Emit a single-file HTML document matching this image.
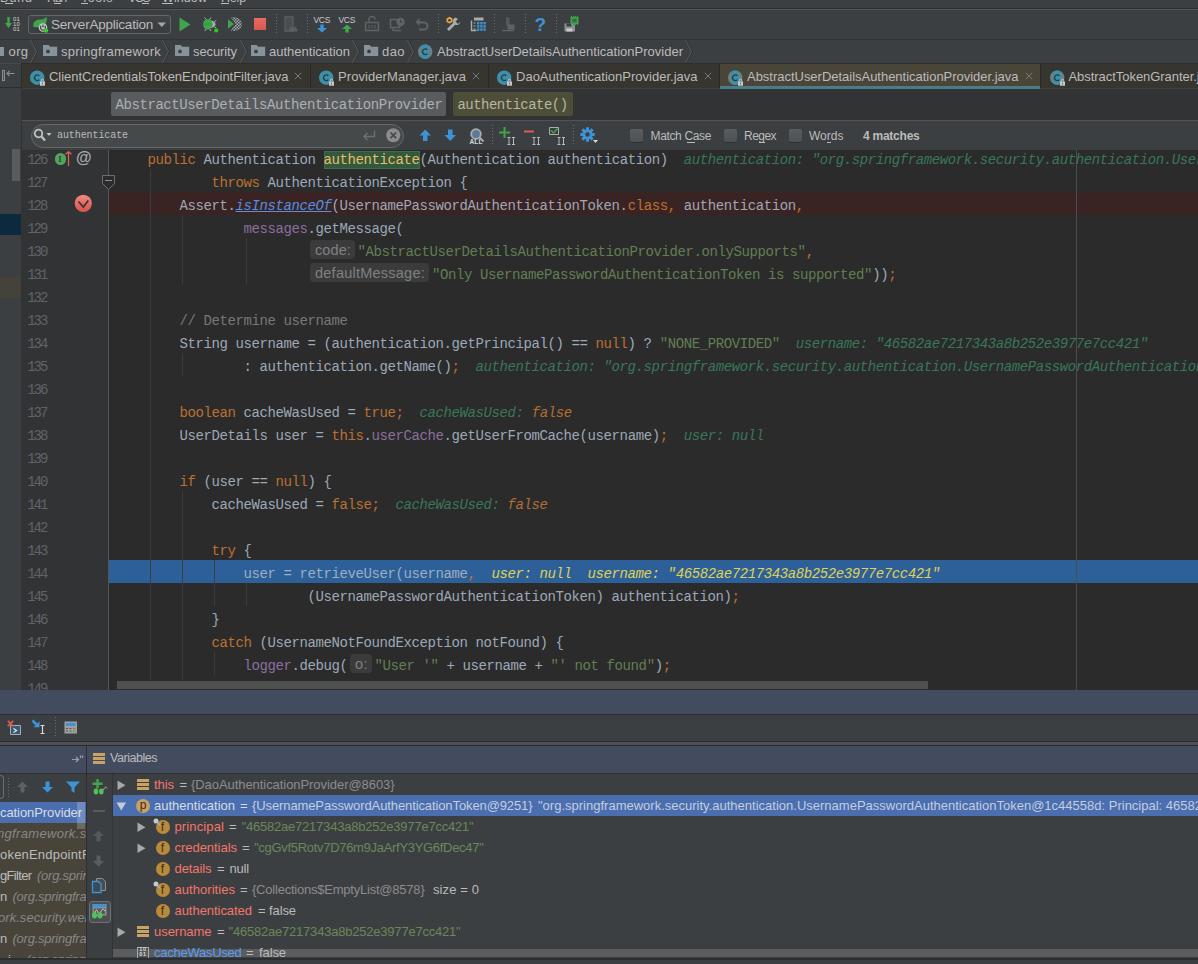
<!DOCTYPE html>
<html lang="en"><head><meta charset="utf-8"><title>IDE</title>
<style>
html,body{margin:0;padding:0;background:#3c3f41}
body{width:1198px;height:964px;overflow:hidden;background:#3c3f41;position:relative;font-family:'Liberation Sans',sans-serif}
.r{position:absolute;display:block}
.t{position:absolute;white-space:pre;line-height:1;font-family:'Liberation Sans',sans-serif}
.m{font-family:'Liberation Mono',monospace}
.cl{position:absolute;left:115.5px;white-space:pre;font:14px/23px 'Liberation Mono',monospace;letter-spacing:-0.4px;color:#a9b7c6;height:23px;opacity:.9}
.cl i{font-style:italic}
.k{color:#cc7832}.s{color:#6a8759}.fd{color:#9876aa}.c{color:#808080}.dv{color:#3b8060;font-style:italic}.dv.k{color:#c57633}.ln{position:absolute;left:27.300px;font:14px/23px 'Liberation Mono',monospace;letter-spacing:-2.1px;color:#606366}
.hint{position:absolute;background:#3b3b3b;border-radius:4px;height:18.5px}
</style></head>
<body>
<div class="r" style="left:0px;top:0px;width:1198px;height:8px;background:#3c3f41;"></div>
<span class="t" style="left:0px;top:-7.98px;font-size:12.5px;color:#bbbbbb;letter-spacing:1.041px;">Build</span>
<span class="t" style="left:47px;top:-7.98px;font-size:12.5px;color:#bbbbbb;letter-spacing:-1.312px;">Run</span>
<span class="t" style="left:81px;top:-7.98px;font-size:12.5px;color:#bbbbbb;letter-spacing:0.562px;">Tools</span>
<span class="t" style="left:128px;top:-7.98px;font-size:12.5px;color:#bbbbbb;letter-spacing:-1.568px;">VCS</span>
<span class="t" style="left:162px;top:-7.98px;font-size:12.5px;color:#bbbbbb;letter-spacing:0.089px;">Window</span>
<span class="t" style="left:221px;top:-7.98px;font-size:12.5px;color:#bbbbbb;letter-spacing:-0.180px;">Help</span>
<div class="r" style="left:5px;top:3px;width:8px;height:1px;background:#bbbbbb;"></div>
<div class="r" style="left:54px;top:3px;width:7px;height:1px;background:#bbbbbb;"></div>
<div class="r" style="left:81px;top:3px;width:7px;height:1px;background:#bbbbbb;"></div>
<div class="r" style="left:142px;top:3px;width:7px;height:1px;background:#bbbbbb;"></div>
<div class="r" style="left:162px;top:3px;width:11px;height:1px;background:#bbbbbb;"></div>
<div class="r" style="left:221px;top:3px;width:8px;height:1px;background:#bbbbbb;"></div>
<div class="r" style="left:0px;top:8px;width:1198px;height:1px;background:#2d2f30;"></div>
<div class="r" style="left:0px;top:9px;width:1198px;height:1px;background:#555759;"></div>
<div class="r" style="left:0px;top:10px;width:1198px;height:29px;background:#3c3f41;"></div>
<div class="r" style="left:0px;top:39px;width:1198px;height:1px;background:#323436;"></div>
<svg class="r" style="left:4px;top:16px;" width="18" height="17" viewBox="0 0 18 17"><path d="M3.300 1h2.400v6h2.300L4.500 12 1 7h2.300z" fill="#3fa94a"/></svg>
<span class="t" style="left:13px;top:16.22px;font-size:6px;color:#d4d4d4;letter-spacing:0.156px;">01</span>
<span class="t" style="left:13px;top:21.22px;font-size:6px;color:#d4d4d4;letter-spacing:0.156px;">10</span>
<span class="t" style="left:13px;top:26.22px;font-size:6px;color:#d4d4d4;letter-spacing:0.156px;">01</span>
<div class="r" style="left:28px;top:15px;width:143px;height:19px;background:#3c3f41;border:1px solid #646769;border-radius:3px;box-sizing:border-box;background:linear-gradient(#414446,#393c3e)"></div>
<svg class="r" style="left:32px;top:16px;" width="17" height="17" viewBox="0 0 17 17"><path d="M1.5 11C0 6 4 3.5 9 3.5 12 3.500 13.500 2 14.500 .5c1 5-1 9.500-5.500 10.500-3 .6-5.500 0-7.500 0z" fill="#3fa54b"/><circle cx="11" cy="11.5" r="4.300" fill="#c9c9c9"/><path d="M9.300 9.800a2.500 2.500 0 1 0 3.400 0M11 8.500v3" stroke="#444" stroke-width="1.200" fill="none"/><circle cx="14" cy="14.500" r="2.200" fill="#2fd02f"/></svg>
<span class="t" style="left:51px;top:17.57px;font-size:13.5px;color:#bbbbbb;letter-spacing:-0.224px;">ServerApplication</span>
<svg class="r" style="left:157px;top:22px;" width="10" height="6" viewBox="0 0 10 6"><path d="M.5 .5h8.500L4.750 5z" fill="#a4a6a8"/></svg>
<svg class="r" style="left:179px;top:17px;" width="13" height="15" viewBox="0 0 13 15"><path d="M.5 .5L11.500 7.500 .5 14.500z" fill="#3fa54b"/></svg>
<svg class="r" style="left:202px;top:16px;" width="17" height="17" viewBox="0 0 17 17"><path d="M2.500 1.500l2 2.200M9 1.500L7.500 3.700M2.500 15l2-2.200M9 15l-1.500-2.200M12.500 5.500l1.800-1M12.500 11l1.800 1" stroke="#b4b6b8" stroke-width="1" fill="none"/><path d="M9 4.500c3 .5 4.500 2 4.500 3.800S12 11.500 9 12z" fill="#a9abad"/><ellipse cx="5.800" cy="8.200" rx="4.800" ry="5.200" fill="#3fa54b"/><path d="M1 8.200h9.500" stroke="#2f8e3f" stroke-width=".6"/><circle cx="14.200" cy="14.500" r="2.100" fill="#22d022"/></svg>
<svg class="r" style="left:226px;top:16px;" width="17" height="17" viewBox="0 0 17 17"><defs><pattern id="ck" width="3" height="3" patternUnits="userSpaceOnUse"><rect width="1.500" height="1.500" fill="#aeb0b2"/><rect x="1.500" y="1.500" width="1.500" height="1.500" fill="#aeb0b2"/></pattern></defs><path d="M5 1.500C9 -.5 15.500 3 15.800 8S10 16.500 5 14.500L9.500 8z" fill="url(#ck)"/><path d="M2 3.300L8 8 2 12.700z" fill="#3fa54b"/></svg>
<div class="r" style="left:254px;top:18px;width:12px;height:12px;background:#e0625a;background:linear-gradient(#e96c60,#d8574d)"></div>
<div class="r" style="left:276px;top:14px;width:1px;height:21px;background:repeating-linear-gradient(#6a6d6f 0 1px,transparent 1px 3px)"></div>
<svg class="r" style="left:282px;top:16px;" width="17" height="17" viewBox="0 0 17 17"><path d="M3 .8h8v14.400h-8z" fill="#4a4d4f" stroke="#5e6163" stroke-width="1.200"/><path d="M6.500 15.500a4.500 4.500 0 0 1 9 0z" fill="#5c5f61"/><path d="M8 10.500l1 1.500M14 10.500l-1 1.500" stroke="#5c5f61"/></svg>
<div class="r" style="left:307px;top:14px;width:1px;height:21px;background:repeating-linear-gradient(#6a6d6f 0 1px,transparent 1px 3px)"></div>
<span class="t" style="left:313.5px;top:15.50px;font-size:8.5px;color:#c8cacc;letter-spacing:-0.328px;">VCS</span>
<svg class="r" style="left:317px;top:24px;" width="11" height="9" viewBox="0 0 11 9"><path d="M3.300 .5h3.400v3.500H10L5 8.500 0 4h3.300z" fill="#3d93d3"/></svg>
<span class="t" style="left:338.5px;top:15.50px;font-size:8.5px;color:#c8cacc;letter-spacing:-0.328px;">VCS</span>
<svg class="r" style="left:342px;top:24px;" width="11" height="9" viewBox="0 0 11 9"><path d="M3.300 8.500h3.400V5H10L5 .5 0 5h3.300z" fill="#3fa54b"/></svg>
<svg class="r" style="left:364px;top:16px;" width="17" height="17" viewBox="0 0 17 17"><path d="M1.500 6.500h13v8h-13zM5 6V3.500a3 3 0 0 1 6 0" fill="none" stroke="#606365" stroke-width="1.500"/><path d="M5 9v3.500M8 9v3.500M11 9v3.500" stroke="#606365"/></svg>
<svg class="r" style="left:389px;top:16px;" width="17" height="17" viewBox="0 0 17 17"><path d="M1.500 3.500h9v8h-9z" fill="none" stroke="#606365" stroke-width="1.500"/><path d="M4 11.500v3h8" fill="none" stroke="#606365" stroke-width="1.300"/><circle cx="11.500" cy="6" r="4.200" fill="#606365"/><path d="M11.500 3.500V6h2" stroke="#3c3f41" fill="none"/></svg>
<svg class="r" style="left:414px;top:16px;" width="17" height="17" viewBox="0 0 17 17"><path d="M5.500 2L1.500 6l4 4V7.500h4.500a2.500 2.500 0 0 1 0 5H5v2h5a4.500 4.500 0 0 0 0-9H5.500z" fill="#606365"/></svg>
<div class="r" style="left:438px;top:14px;width:1px;height:21px;background:repeating-linear-gradient(#6a6d6f 0 1px,transparent 1px 3px)"></div>
<svg class="r" style="left:445px;top:16px;" width="17" height="17" viewBox="0 0 17 17"><path d="M10.500 1.500a3.800 3.800 0 0 0-2.300 5.200L2 13l2 2 6.200-6.200a3.800 3.800 0 0 0 5.200-3L13 8l-2.500-2.500L13 3z" fill="#a9acae"/><path d="M4.500.8l3 1.700v3.400l-3 1.700-3-1.700V2.500z" fill="#e8a33d"/><circle cx="4.500" cy="4.200" r="1.300" fill="#3c3f41"/></svg>
<svg class="r" style="left:470px;top:16px;" width="17" height="17" viewBox="0 0 17 17"><path d="M1.500 4.500v10h5" fill="none" stroke="#a9acae" stroke-width="1.400"/><path d="M4 1.500h9.500v3H4z" fill="#a9acae"/><rect x="7.0" y="6.0" width="2.400" height="2.400" fill="#3d93d3"/><rect x="7.0" y="9.2" width="2.400" height="2.400" fill="#3d93d3"/><rect x="7.0" y="12.4" width="2.400" height="2.400" fill="#3d93d3"/><rect x="10.2" y="6.0" width="2.400" height="2.400" fill="#3d93d3"/><rect x="10.2" y="9.2" width="2.400" height="2.400" fill="#3d93d3"/><rect x="10.2" y="12.4" width="2.400" height="2.400" fill="#3d93d3"/><rect x="13.4" y="6.0" width="2.400" height="2.400" fill="#3d93d3"/><rect x="13.4" y="9.2" width="2.400" height="2.400" fill="#3d93d3"/><rect x="13.4" y="12.4" width="2.400" height="2.400" fill="#3d93d3"/><path d="M3.500 7h2M3.500 10h2M3.500 13h2" stroke="#a9acae"/></svg>
<div class="r" style="left:494px;top:14px;width:1px;height:21px;background:repeating-linear-gradient(#6a6d6f 0 1px,transparent 1px 3px)"></div>
<svg class="r" style="left:500px;top:16px;" width="17" height="17" viewBox="0 0 17 17"><path d="M6 1.500h3.500v8H6z" fill="#55585a"/><path d="M2 14.500h12" stroke="#606365" stroke-width="1.400"/><path d="M7.500 8.500h7v5h-7z" fill="#5f6365"/></svg>
<div class="r" style="left:525px;top:14px;width:1px;height:21px;background:repeating-linear-gradient(#6a6d6f 0 1px,transparent 1px 3px)"></div>
<span class="t" style="left:534.5px;top:14.92px;font-size:19px;color:#3d93d3;letter-spacing:-0.609px;font-weight:bold;">?</span>
<div class="r" style="left:556px;top:14px;width:1px;height:21px;background:repeating-linear-gradient(#6a6d6f 0 1px,transparent 1px 3px)"></div>
<svg class="r" style="left:563px;top:16px;" width="17" height="17" viewBox="0 0 17 17"><path d="M1.500 7.500h9l1.500 1.500v6.500h-10.500z" fill="#8d9092"/><path d="M3.500 7.500h5v3h-5z" fill="#3c3f41"/><path d="M3.500 12.500h6v3h-6z" fill="#c9cbcd"/><rect x="7.500" y="1" width="8" height="7" fill="#3fa54b"/><rect x="9.300" y="2.600" width="4.400" height="3.800" fill="#3c3f41" opacity=".55"/><path d="M8.500 0v1M10.500 0v1M12.500 0v1M14.500 0v1M8.500 8v1M10.500 8v1M12.500 8v1M14.500 8v1" stroke="#3fa54b"/></svg>
<div class="r" style="left:0px;top:40px;width:1198px;height:23px;background:#3c3f41;"></div>
<div class="r" style="left:0px;top:63px;width:1198px;height:1px;background:#2b2d2e;"></div>
<div class="r" style="left:0px;top:63px;width:21px;height:1px;background:#47494b;"></div>
<div class="r" style="left:0px;top:46.8px;width:4px;height:9.2px;background:#87939b;"></div>
<span class="t" style="left:8.5px;top:45.00px;font-size:13px;color:#bbbbbb;letter-spacing:0.401px;">org</span>
<svg class="r" style="left:29.5px;top:40px;" width="9" height="23" viewBox="0 0 9 23"><path d="M1.500 0L7.500 11.500 1.500 23" fill="none" stroke="#2d2f31"/><path d="M.5 0L6.500 11.500 .5 23" fill="none" stroke="#585b5d"/></svg>
<svg class="r" style="left:43px;top:45px;" width="15" height="12" viewBox="0 0 15 12"><path d="M0 0h5.500l1.800 1.800H14.200V11H0z" fill="#87939b"/><circle cx="5" cy="6.400" r="1.850" fill="#3c3f41"/></svg>
<span class="t" style="left:61px;top:45.00px;font-size:13px;color:#bbbbbb;letter-spacing:0.260px;">springframework</span>
<svg class="r" style="left:162px;top:40px;" width="9" height="23" viewBox="0 0 9 23"><path d="M1.500 0L7.500 11.500 1.500 23" fill="none" stroke="#2d2f31"/><path d="M.5 0L6.500 11.500 .5 23" fill="none" stroke="#585b5d"/></svg>
<svg class="r" style="left:175px;top:45px;" width="15" height="12" viewBox="0 0 15 12"><path d="M0 0h5.500l1.800 1.800H14.200V11H0z" fill="#87939b"/><circle cx="5" cy="6.400" r="1.850" fill="#3c3f41"/></svg>
<span class="t" style="left:193px;top:45.00px;font-size:13px;color:#bbbbbb;letter-spacing:-0.100px;">security</span>
<svg class="r" style="left:240px;top:40px;" width="9" height="23" viewBox="0 0 9 23"><path d="M1.500 0L7.500 11.500 1.500 23" fill="none" stroke="#2d2f31"/><path d="M.5 0L6.500 11.500 .5 23" fill="none" stroke="#585b5d"/></svg>
<svg class="r" style="left:251px;top:45px;" width="15" height="12" viewBox="0 0 15 12"><path d="M0 0h5.500l1.800 1.800H14.200V11H0z" fill="#87939b"/><circle cx="5" cy="6.400" r="1.850" fill="#3c3f41"/></svg>
<span class="t" style="left:269px;top:45.00px;font-size:13px;color:#bbbbbb;letter-spacing:0.003px;">authentication</span>
<svg class="r" style="left:352px;top:40px;" width="9" height="23" viewBox="0 0 9 23"><path d="M1.500 0L7.500 11.500 1.500 23" fill="none" stroke="#2d2f31"/><path d="M.5 0L6.500 11.500 .5 23" fill="none" stroke="#585b5d"/></svg>
<svg class="r" style="left:364px;top:45px;" width="15" height="12" viewBox="0 0 15 12"><path d="M0 0h5.500l1.800 1.800H14.200V11H0z" fill="#87939b"/><circle cx="5" cy="6.400" r="1.850" fill="#3c3f41"/></svg>
<span class="t" style="left:382px;top:45.00px;font-size:13px;color:#bbbbbb;letter-spacing:0.432px;">dao</span>
<svg class="r" style="left:407px;top:40px;" width="9" height="23" viewBox="0 0 9 23"><path d="M1.500 0L7.500 11.500 1.500 23" fill="none" stroke="#2d2f31"/><path d="M.5 0L6.500 11.500 .5 23" fill="none" stroke="#585b5d"/></svg>
<svg class="r" style="left:418px;top:43.5px;" width="17" height="16" viewBox="0 0 17 16"><circle cx="7.200" cy="7.700" r="7.200" fill="#727e80"/><path d="M3.100 1.800a7.200 7.200 0 0 1 8.200 0v11.800a7.200 7.200 0 0 1-8.200 0z" fill="#3e8fa8"/><path d="M9.300 5.800A2.700 2.900 0 1 0 9.300 9.600" fill="none" stroke="#263c45" stroke-width="1.250"/></svg>
<span class="t" style="left:437px;top:45.00px;font-size:13px;color:#bbbbbb;letter-spacing:0.008px;">AbstractUserDetailsAuthenticationProvider</span>
<svg class="r" style="left:685px;top:40px;" width="9" height="23" viewBox="0 0 9 23"><path d="M1.500 0L7.500 11.500 1.500 23" fill="none" stroke="#2d2f31"/><path d="M.5 0L6.500 11.500 .5 23" fill="none" stroke="#585b5d"/></svg>
<div class="r" style="left:0px;top:64px;width:22px;height:25px;background:#3c3f41;"></div>
<div class="r" style="left:0px;top:87px;width:22px;height:1px;background:#2b2d2f;"></div>
<div class="r" style="left:21px;top:64px;width:1px;height:25px;background:#2b2d2f;"></div>
<div class="r" style="left:22px;top:64px;width:1176px;height:24px;background:#37352f;"></div>
<div class="r" style="left:22px;top:88px;width:1176px;height:1px;background:#3e4042;"></div>
<div class="r" style="left:720px;top:64px;width:320px;height:22px;background:#4a4539;"></div>
<div class="r" style="left:720px;top:86px;width:320px;height:3px;background:#497d88;"></div>
<div class="r" style="left:1040px;top:64px;width:1px;height:24px;background:#2a2927;"></div>
<div class="r" style="left:2px;top:70px;width:3px;height:11px;background:#4a4d4f;border:1px solid #8c8e90;box-sizing:border-box"></div>
<svg class="r" style="left:6px;top:70px;" width="9" height="8" viewBox="0 0 9 8"><path d="M1 3.500h7.500M3.500 1L1 3.500 3.500 6" fill="none" stroke="#8c8e90" stroke-width="1.100"/></svg>
<svg class="r" style="left:30px;top:69.5px;" width="17" height="16" viewBox="0 0 17 16"><circle cx="7.200" cy="7.700" r="7.200" fill="#3e8fa8"/><path d="M9.300 5.800A2.700 2.900 0 1 0 9.300 9.600" fill="none" stroke="#263c45" stroke-width="1.250"/><path d="M10 11.500h5v4.200h-5z" fill="#c5c9cc"/><path d="M11.300 11.500V10.300a1.200 1.200 0 0 1 2.400 0v1.200" fill="none" stroke="#c5c9cc" stroke-width="1"/><rect x="12.100" y="12.700" width="0.800" height="1.700" fill="#555"/></svg>
<span class="t" style="left:49px;top:70.00px;font-size:13px;color:#bbbbbb;letter-spacing:-0.028px;">ClientCredentialsTokenEndpointFilter.java</span>
<svg class="r" style="left:293px;top:71px;" width="10" height="10" viewBox="0 0 10 10"><path d="M1.800 1.800l6.400 6.400M8.200 1.800l-6.400 6.400" stroke="#77797b" stroke-width="1"/></svg>
<svg class="r" style="left:319px;top:69.5px;" width="17" height="16" viewBox="0 0 17 16"><circle cx="7.200" cy="7.700" r="7.200" fill="#3e8fa8"/><path d="M9.300 5.800A2.700 2.900 0 1 0 9.300 9.600" fill="none" stroke="#263c45" stroke-width="1.250"/><path d="M10 11.500h5v4.200h-5z" fill="#c5c9cc"/><path d="M11.300 11.500V10.300a1.200 1.200 0 0 1 2.400 0v1.200" fill="none" stroke="#c5c9cc" stroke-width="1"/><rect x="12.100" y="12.700" width="0.800" height="1.700" fill="#555"/></svg>
<span class="t" style="left:338px;top:70.00px;font-size:13px;color:#bbbbbb;letter-spacing:0.077px;">ProviderManager.java</span>
<svg class="r" style="left:471px;top:71px;" width="10" height="10" viewBox="0 0 10 10"><path d="M1.800 1.800l6.400 6.400M8.200 1.800l-6.400 6.400" stroke="#77797b" stroke-width="1"/></svg>
<svg class="r" style="left:497px;top:69.5px;" width="17" height="16" viewBox="0 0 17 16"><circle cx="7.200" cy="7.700" r="7.200" fill="#3e8fa8"/><path d="M9.300 5.800A2.700 2.900 0 1 0 9.300 9.600" fill="none" stroke="#263c45" stroke-width="1.250"/><path d="M10 11.500h5v4.200h-5z" fill="#c5c9cc"/><path d="M11.300 11.500V10.300a1.200 1.200 0 0 1 2.400 0v1.200" fill="none" stroke="#c5c9cc" stroke-width="1"/><rect x="12.100" y="12.700" width="0.800" height="1.700" fill="#555"/></svg>
<span class="t" style="left:516px;top:70.00px;font-size:13px;color:#bbbbbb;letter-spacing:0.004px;">DaoAuthenticationProvider.java</span>
<svg class="r" style="left:703px;top:71px;" width="10" height="10" viewBox="0 0 10 10"><path d="M1.800 1.800l6.400 6.400M8.200 1.800l-6.400 6.400" stroke="#77797b" stroke-width="1"/></svg>
<div class="r" style="left:719px;top:64px;width:1px;height:24px;background:#2a2927;"></div>
<div class="r" style="left:310px;top:64px;width:1px;height:24px;background:#2a2927;"></div>
<div class="r" style="left:488px;top:64px;width:1px;height:24px;background:#2a2927;"></div>
<svg class="r" style="left:728px;top:69.5px;" width="17" height="16" viewBox="0 0 17 16"><circle cx="7.200" cy="7.700" r="7.200" fill="#727e80"/><path d="M3.100 1.800a7.200 7.200 0 0 1 8.200 0v11.800a7.200 7.200 0 0 1-8.200 0z" fill="#3e8fa8"/><path d="M9.300 5.800A2.700 2.900 0 1 0 9.300 9.600" fill="none" stroke="#263c45" stroke-width="1.250"/><path d="M10 11.500h5v4.200h-5z" fill="#c5c9cc"/><path d="M11.300 11.500V10.300a1.200 1.200 0 0 1 2.400 0v1.200" fill="none" stroke="#c5c9cc" stroke-width="1"/><rect x="12.100" y="12.700" width="0.800" height="1.700" fill="#555"/></svg>
<span class="t" style="left:747px;top:70.00px;font-size:13px;color:#bbbbbb;letter-spacing:-0.020px;">AbstractUserDetailsAuthenticationProvider.java</span>
<svg class="r" style="left:1024px;top:71px;" width="10" height="10" viewBox="0 0 10 10"><path d="M1.800 1.800l6.400 6.400M8.200 1.800l-6.400 6.400" stroke="#77797b" stroke-width="1"/></svg>
<svg class="r" style="left:1050px;top:69.5px;" width="17" height="16" viewBox="0 0 17 16"><circle cx="7.200" cy="7.700" r="7.200" fill="#727e80"/><path d="M3.100 1.800a7.200 7.200 0 0 1 8.200 0v11.800a7.200 7.200 0 0 1-8.200 0z" fill="#3e8fa8"/><path d="M9.300 5.800A2.700 2.900 0 1 0 9.300 9.600" fill="none" stroke="#263c45" stroke-width="1.250"/><path d="M10 11.500h5v4.200h-5z" fill="#c5c9cc"/><path d="M11.300 11.500V10.300a1.200 1.200 0 0 1 2.400 0v1.200" fill="none" stroke="#c5c9cc" stroke-width="1"/><rect x="12.100" y="12.700" width="0.800" height="1.700" fill="#555"/></svg>
<span class="t" style="left:1068.5px;top:70.00px;font-size:13px;color:#bbbbbb;letter-spacing:-0.048px;">AbstractTokenGranter.java</span>
<div class="r" style="left:0px;top:89px;width:22px;height:601px;background:#3c3f41;"></div>
<div class="r" style="left:21px;top:89px;width:1px;height:601px;background:#323232;"></div>
<div class="r" style="left:12px;top:149px;width:8px;height:32px;background:#595b5d;"></div>
<div class="r" style="left:0px;top:214px;width:21px;height:21px;background:#0d293e;"></div>
<div class="r" style="left:0px;top:277px;width:21px;height:21px;background:#45423b;"></div>
<div class="r" style="left:22px;top:89px;width:1176px;height:31px;background:#313335;"></div>
<div class="r" style="left:111px;top:92px;width:335px;height:24px;background:#595b5d;border-radius:2px"></div>
<div class="r" style="left:453px;top:92px;width:120px;height:24px;background:#4e4d37;border-radius:2px"></div>
<span class="t m" style="left:115.5px;top:98.27px;font-size:14px;color:#a9b1b8;letter-spacing:-0.426px;">AbstractUserDetailsAuthenticationProvider</span>
<span class="t m" style="left:457.5px;top:98.27px;font-size:14px;color:#b4b8a4;letter-spacing:-0.545px;">authenticate()</span>
<div class="r" style="left:22px;top:120px;width:1176px;height:1px;background:#515355;"></div>
<div class="r" style="left:22px;top:121px;width:1176px;height:29px;background:#3c3f41;"></div>
<div class="r" style="left:31px;top:124px;width:373px;height:24px;background:#45494a;border:1px solid #646769;border-radius:12px;box-sizing:border-box"></div>
<svg class="r" style="left:33px;top:128px;" width="22" height="16" viewBox="0 0 22 16"><circle cx="5.500" cy="5.500" r="3.800" fill="none" stroke="#c0c2c4" stroke-width="1.800"/><path d="M8.300 8.300L12 12.500" stroke="#c0c2c4" stroke-width="2.200"/><path d="M13.500 5h5l-2.500 3z" fill="#c0c2c4"/></svg>
<span class="t m" style="left:57px;top:130.83px;font-size:10px;color:#bbbbbb;letter-spacing:-0.085px;">authenticate</span>
<svg class="r" style="left:361px;top:129px;" width="16" height="13" viewBox="0 0 16 13"><path d="M13.500 1.500v6H3M6.500 4L3 7.500 6.500 11" fill="none" stroke="#6e7072" stroke-width="1.400"/></svg>
<svg class="r" style="left:386px;top:128px;" width="15" height="15" viewBox="0 0 15 15"><circle cx="7.300" cy="7.300" r="7" fill="#8a8c8e"/><path d="M4.500 4.500l5.600 5.600M10.100 4.500l-5.600 5.600" stroke="#45494a" stroke-width="1.700"/></svg>
<svg class="r" style="left:419px;top:129px;" width="13" height="13" viewBox="0 0 13 13"><path d="M4 12h4.500V6.500H12L6.250 .5 .5 6.500H4z" fill="#3d93d3"/></svg>
<svg class="r" style="left:444px;top:129px;" width="13" height="13" viewBox="0 0 13 13"><path d="M4 .5h4.500V6H12L6.250 12 .5 6H4z" fill="#3d93d3"/></svg>
<svg class="r" style="left:468px;top:127px;" width="18" height="17" viewBox="0 0 18 17"><circle cx="8" cy="7" r="4.800" fill="#5a7a98" stroke="#a9acae" stroke-width="1.800"/><path d="M11.500 10.500l4 4" stroke="#a9acae" stroke-width="2"/></svg>
<span class="t" style="left:469.5px;top:138.50px;font-size:6.5px;color:#d8dadc;letter-spacing:0.120px;font-weight:bold;">ALL</span>
<div class="r" style="left:492px;top:125px;width:1px;height:21px;background:repeating-linear-gradient(#6a6d6f 0 1px,transparent 1px 3px)"></div>
<svg class="r" style="left:499px;top:127px;" width="12" height="12" viewBox="0 0 12 12"><path d="M5.500 0v11M0 5.500h11" stroke="#3fa54b" stroke-width="2"/></svg>
<svg class="r" style="left:507px;top:137px;" width="9" height="8" viewBox="0 0 9 8"><path d="M.5 .5h3M.5 7.500h3M2 .5v7M5 .5h3M5 7.500h3M6.500 .5v7" stroke="#c4c6c8" stroke-width=".9" fill="none"/></svg>
<svg class="r" style="left:524px;top:130px;" width="12" height="4" viewBox="0 0 12 4"><path d="M0 1.500h10" stroke="#df5a50" stroke-width="2"/></svg>
<svg class="r" style="left:532px;top:137px;" width="9" height="8" viewBox="0 0 9 8"><path d="M.5 .5h3M.5 7.500h3M2 .5v7M5 .5h3M5 7.500h3M6.500 .5v7" stroke="#c4c6c8" stroke-width=".9" fill="none"/></svg>
<svg class="r" style="left:549px;top:127px;" width="12" height="10" viewBox="0 0 12 10"><path d="M.5 .5h9v7h-9z" fill="none" stroke="#a9acae"/><path d="M2 3.500l2.500 2.500L8.500 1.500" fill="none" stroke="#3fa54b" stroke-width="1.500"/></svg>
<svg class="r" style="left:557px;top:137px;" width="9" height="8" viewBox="0 0 9 8"><path d="M.5 .5h3M.5 7.500h3M2 .5v7M5 .5h3M5 7.500h3M6.500 .5v7" stroke="#c4c6c8" stroke-width=".9" fill="none"/></svg>
<div class="r" style="left:573px;top:125px;width:1px;height:21px;background:repeating-linear-gradient(#6a6d6f 0 1px,transparent 1px 3px)"></div>
<svg class="r" style="left:580px;top:127px;" width="15" height="15" viewBox="0 0 15 15"><g transform="translate(7.500 7.500)"><rect x="-1.500" y="-7.200" width="3" height="4" fill="#3d93d3" transform="rotate(0)"/><rect x="-1.500" y="-7.200" width="3" height="4" fill="#3d93d3" transform="rotate(45)"/><rect x="-1.500" y="-7.200" width="3" height="4" fill="#3d93d3" transform="rotate(90)"/><rect x="-1.500" y="-7.200" width="3" height="4" fill="#3d93d3" transform="rotate(135)"/><rect x="-1.500" y="-7.200" width="3" height="4" fill="#3d93d3" transform="rotate(180)"/><rect x="-1.500" y="-7.200" width="3" height="4" fill="#3d93d3" transform="rotate(225)"/><rect x="-1.500" y="-7.200" width="3" height="4" fill="#3d93d3" transform="rotate(270)"/><rect x="-1.500" y="-7.200" width="3" height="4" fill="#3d93d3" transform="rotate(315)"/><circle r="5" fill="#3d93d3"/><circle r="2.200" fill="#3c3f41"/></g></svg>
<svg class="r" style="left:593px;top:140px;" width="6" height="4" viewBox="0 0 6 4"><path d="M0 0h5L2.500 3z" fill="#d8dadc"/></svg>
<div class="r" style="left:630px;top:129px;width:13px;height:13px;background:#55585a;border-radius:2px;box-shadow:0 1px 0 #2e3032;background:linear-gradient(#5a5d5f,#4e5153)"></div>
<span class="t" style="left:650.5px;top:129.84px;font-size:12px;color:#bbbbbb;letter-spacing:-0.353px;">Match Case</span>
<div class="r" style="left:687px;top:142px;width:8px;height:1px;background:#bbbbbb;"></div>
<div class="r" style="left:724px;top:129px;width:13px;height:13px;background:#55585a;border-radius:2px;box-shadow:0 1px 0 #2e3032;background:linear-gradient(#5a5d5f,#4e5153)"></div>
<span class="t" style="left:744px;top:129.84px;font-size:12px;color:#bbbbbb;letter-spacing:-0.537px;">Regex</span>
<div class="r" style="left:758.5px;top:142px;width:6.5px;height:1px;background:#bbbbbb;"></div>
<div class="r" style="left:789px;top:129px;width:13px;height:13px;background:#55585a;border-radius:2px;box-shadow:0 1px 0 #2e3032;background:linear-gradient(#5a5d5f,#4e5153)"></div>
<span class="t" style="left:809px;top:129.84px;font-size:12px;color:#bbbbbb;letter-spacing:0.009px;">Words</span>
<div class="r" style="left:827px;top:142px;width:4px;height:1px;background:#bbbbbb;"></div>
<span class="t" style="left:863px;top:129.84px;font-size:12px;color:#bbbbbb;letter-spacing:-0.245px;font-weight:bold;">4 matches</span>
<div class="r" style="left:22px;top:150px;width:87px;height:540px;background:#313335;"></div>
<div class="r" style="left:109px;top:150px;width:1089px;height:540px;background:#2b2b2b;"></div>
<div class="r" style="left:1076px;top:150px;width:1px;height:540px;background:#4a4a4a;"></div>
<div class="r" style="left:109px;top:192px;width:1089px;height:23px;background:#3a2323;"></div>
<div class="r" style="left:109px;top:560px;width:1089px;height:23px;background:#2d6099;"></div>
<div class="r" style="left:1076px;top:150px;width:1px;height:540px;background:#4c4c4c;"></div>
<div class="r" style="left:324px;top:151px;width:96px;height:18px;background:#32593d;border:1px solid #3f6c4b;box-sizing:border-box"></div>
<div class="r" style="left:150px;top:169px;width:1px;height:521px;background:#3c3c3c;"></div>
<div class="r" style="left:182px;top:215px;width:1px;height:69px;background:#3c3c3c;"></div>
<div class="r" style="left:182px;top:353px;width:1px;height:23px;background:#3c3c3c;"></div>
<div class="r" style="left:182px;top:491px;width:1px;height:199px;background:#3c3c3c;"></div>
<div class="r" style="left:214px;top:560px;width:1px;height:46px;background:#3c3c3c;"></div>
<div class="r" style="left:214px;top:652px;width:1px;height:23px;background:#3c3c3c;"></div>
<div class="r" style="left:246px;top:238px;width:1px;height:46px;background:#3c3c3c;"></div>
<div class="r" style="left:246px;top:583px;width:1px;height:23px;background:#3c3c3c;"></div>
<div class="r" style="left:108px;top:150px;width:1px;height:540px;background:#555555;"></div>
<div class="r" style="left:0;top:150px;width:1198px;height:540px;overflow:hidden">
<div class="cl" style="top:-1px;">    <span class="k">public</span> Authentication <span style="color:#ffc66d">authenticate</span>(Authentication authentication)  <span class="dv">authentication: "org.springframework.security.authentication.UsernamePasswordAuthenticationToken@1c44558d: Principal"</span></div>
<div class="ln" style="top:-1px">126</div>
<div class="cl" style="top:22px;">            <span class="k">throws</span> AuthenticationException {</div>
<div class="ln" style="top:22px">127</div>
<div class="cl" style="top:45px;">        Assert.<span style="color:#589df6;font-style:italic;text-decoration:underline">isInstanceOf</span>(UsernamePasswordAuthenticationToken.<span class="k">class,</span> authentication<span class="k">,</span></div>
<div class="ln" style="top:45px">128</div>
<div class="cl" style="top:68px;">                <span class="fd">messages</span>.getMessage(</div>
<div class="ln" style="top:68px">129</div>
<div class="cl" style="top:91px;">                        <span style="display:inline-block;width:50px"></span><span class="s">"AbstractUserDetailsAuthenticationProvider.onlySupports"</span><span class="k">,</span></div>
<div class="ln" style="top:91px">130</div>
<div class="hint" style="left:310px;top:90px;width:45px"></div>
<span class="t" style="left:315px;top:93.03px;font-size:14.5px;color:#7d8184;letter-spacing:0.103px;">code:</span>
<div class="cl" style="top:114px;">                        <span style="display:inline-block;width:124.5px"></span><span class="s">"Only UsernamePasswordAuthenticationToken is supported"</span>))<span class="k">;</span></div>
<div class="ln" style="top:114px">131</div>
<div class="hint" style="left:310px;top:113px;width:119px"></div>
<span class="t" style="left:315px;top:116.03px;font-size:14.5px;color:#7d8184;letter-spacing:0.240px;">defaultMessage:</span>
<div class="cl" style="top:137px;"></div>
<div class="ln" style="top:137px">132</div>
<div class="cl" style="top:160px;">        <span class="c">// Determine username</span></div>
<div class="ln" style="top:160px">133</div>
<div class="cl" style="top:183px;">        String username = (authentication.getPrincipal() == <span class="k">null</span>) ? <span class="s">"NONE_PROVIDED"</span>  <span class="dv">username: "46582ae7217343a8b252e3977e7cc421"</span></div>
<div class="ln" style="top:183px">134</div>
<div class="cl" style="top:206px;">                : authentication.getName()<span class="k">;</span>  <span class="dv">authentication: "org.springframework.security.authentication.UsernamePasswordAuthenticationToken@1c44558d"</span></div>
<div class="ln" style="top:206px">135</div>
<div class="cl" style="top:229px;"></div>
<div class="ln" style="top:229px">136</div>
<div class="cl" style="top:252px;">        <span class="k">boolean</span> cacheWasUsed = <span class="k">true;</span>  <span class="dv">cacheWasUsed: </span><span class="dv k">false</span></div>
<div class="ln" style="top:252px">137</div>
<div class="cl" style="top:275px;">        UserDetails user = <span class="k">this</span>.<span class="fd">userCache</span>.getUserFromCache(username)<span class="k">;</span>  <span class="dv">user: null</span></div>
<div class="ln" style="top:275px">138</div>
<div class="cl" style="top:298px;"></div>
<div class="ln" style="top:298px">139</div>
<div class="cl" style="top:321px;">        <span class="k">if</span> (user == <span class="k">null</span>) {</div>
<div class="ln" style="top:321px">140</div>
<div class="cl" style="top:344px;">            cacheWasUsed = <span class="k">false;</span>  <span class="dv">cacheWasUsed: </span><span class="dv k">false</span></div>
<div class="ln" style="top:344px">141</div>
<div class="cl" style="top:367px;"></div>
<div class="ln" style="top:367px">142</div>
<div class="cl" style="top:390px;">            <span class="k">try</span> {</div>
<div class="ln" style="top:390px">143</div>
<div class="cl" style="top:413px;">                user = retrieveUser(username<span class="k">,</span>  <span class="dv" style="color:#f2df4c">user: null  username: "46582ae7217343a8b252e3977e7cc421"</span></div>
<div class="ln" style="top:413px">144</div>
<div class="cl" style="top:436px;">                        (UsernamePasswordAuthenticationToken) authentication)<span class="k">;</span></div>
<div class="ln" style="top:436px">145</div>
<div class="cl" style="top:459px;">            }</div>
<div class="ln" style="top:459px">146</div>
<div class="cl" style="top:482px;">            <span class="k">catch</span> (UsernameNotFoundException notFound) {</div>
<div class="ln" style="top:482px">147</div>
<div class="cl" style="top:505px;">                <span class="fd">logger</span>.debug(<span style="display:inline-block;width:27px"></span><span class="s">"User '"</span> + username + <span class="s">"' not found"</span>)<span class="k">;</span></div>
<div class="ln" style="top:505px">148</div>
<div class="hint" style="left:350px;top:504px;width:22px"></div>
<span class="t" style="left:355px;top:507.03px;font-size:14.5px;color:#7d8184;letter-spacing:0.453px;">o:</span>
<div class="cl" style="top:528px;"></div>
<div class="ln" style="top:528px">149</div>
</div>
<div class="r" style="left:54.8px;top:153.3px;width:11.4px;height:11.4px;background:#4fa85a;border-radius:6px"></div>
<span class="t" style="left:58.3px;top:155.08px;font-size:9px;color:#4a3a4a;font-family:'Liberation Serif',serif;font-weight:bold;">I</span>
<svg class="r" style="left:65px;top:151px;" width="8" height="16" viewBox="0 0 8 16"><path d="M3.500 1v14" stroke="#e8624f" stroke-width="1.200"/><path d="M.5 3.200L3.500 .8l3 2.400" fill="none" stroke="#e8624f" stroke-width="1.300"/></svg>
<span class="t" style="left:76px;top:149.96px;font-size:16px;color:#a8aaac;letter-spacing:-0.609px;font-weight:bold;">@</span>
<svg class="r" style="left:102px;top:175px;" width="14" height="16" viewBox="0 0 14 16"><path d="M.5 .5h12v8L6.500 14.500 .5 8.500z" fill="#2b2b2b" stroke="#6c6e70"/><path d="M3 5.500h7" stroke="#8c8e90"/></svg>
<svg class="r" style="left:74px;top:194px;" width="19" height="19" viewBox="0 0 19 19"><defs><linearGradient id="bp" x1="0" y1="0" x2="0" y2="1"><stop offset="0" stop-color="#f0897f"/><stop offset="1" stop-color="#d9544a"/></linearGradient></defs><circle cx="9.300" cy="9.300" r="8.600" fill="url(#bp)"/><path d="M4.500 7.500L9.300 13 14.300 6.500" fill="none" stroke="#3c3436" stroke-width="1.800"/></svg>
<div class="r" style="left:109px;top:680px;width:1089px;height:10px;background:#2b2b2b;"></div>
<div class="r" style="left:1076px;top:680px;width:1px;height:10px;background:#4a4a4a;"></div>
<div class="r" style="left:117px;top:681px;width:811px;height:8px;background:rgba(128,130,132,.42);"></div>
<div class="r" style="left:0px;top:690px;width:1198px;height:24px;background:#434c5e;"></div>
<div class="r" style="left:0px;top:714px;width:1198px;height:1px;background:#2d2f31;"></div>
<div class="r" style="left:0px;top:715px;width:1198px;height:26px;background:#3c3f41;"></div>
<div class="r" style="left:0px;top:741px;width:1198px;height:1px;background:#2b2b2b;"></div>
<div class="r" style="left:0px;top:742px;width:1198px;height:3px;background:#4d5052;"></div>
<div class="r" style="left:0px;top:745px;width:1198px;height:1px;background:#2b2b2b;"></div>
<div class="r" style="left:0px;top:746px;width:1198px;height:27px;background:#434c5e;"></div>
<div class="r" style="left:0px;top:773px;width:1198px;height:1px;background:#2d2f31;"></div>
<div class="r" style="left:0px;top:774px;width:1198px;height:184px;background:#3c3f41;"></div>
<div class="r" style="left:86px;top:746px;width:1px;height:212px;background:#2b2d2f;"></div>
<div class="r" style="left:112px;top:774px;width:1px;height:184px;background:#323436;"></div>
<svg class="r" style="left:7px;top:719.5px;" width="16" height="16" viewBox="0 0 16 16"><path d="M3.500 5.500h10v9h-10z" fill="#3b5a78" stroke="#a9acae"/><path d="M6.500 8.500l3 2-3 2" fill="none" stroke="#e8eaec" stroke-width="1.200"/><path d="M.8 .8l5.400 5.400M6.200 .8L.8 6.200" stroke="#df5a50" stroke-width="1.700"/></svg>
<svg class="r" style="left:31px;top:719px;" width="16" height="16" viewBox="0 0 16 16"><path d="M1.500 1.500l5 5" fill="none" stroke="#3d93d3" stroke-width="2.600"/><path d="M2.500 8.300h6v-6z" fill="#3d93d3"/><path d="M9.500 6.500h4M9.500 14.500h4M11.500 6.500v8" fill="none" stroke="#d8dadc" stroke-width="1.200"/></svg>
<div class="r" style="left:55px;top:717px;width:1px;height:19px;background:repeating-linear-gradient(#6a6d6f 0 1px,transparent 1px 3px)"></div>
<svg class="r" style="left:64px;top:720.7px;" width="14" height="13" viewBox="0 0 14 13"><rect x=".5" y=".5" width="12.500" height="12" fill="#9da0a2"/><rect x="2" y="2" width="9.500" height="3" fill="#3d93d3"/><path d="M2 7.500h2M5.500 7.500h2M2 10h2M5.500 10h2" stroke="#55585a" stroke-width="1.200"/><path d="M9 7.500h2.500" stroke="#df5a50" stroke-width="1.200"/><path d="M9 10h2.500" stroke="#2fc02f" stroke-width="1.200"/></svg>
<svg class="r" style="left:72px;top:753.5px;" width="12" height="10" viewBox="0 0 12 10"><path d="M0 5.500h6M4 3l2.500 2.500L4 8" fill="none" stroke="#9da0a3" stroke-width="1.200"/><path d="M8.500 1.500v2.500M10.500 1.500v2.500" stroke="#9da0a3" stroke-width="1.200"/></svg>
<div class="r" style="left:93px;top:752.5px;width:12px;height:3px;background:#c9a365;"></div>
<div class="r" style="left:93px;top:756.8px;width:12px;height:3px;background:#c9a365;"></div>
<div class="r" style="left:93px;top:761.1px;width:12px;height:3px;background:#c9a365;"></div>
<span class="t" style="left:110px;top:751.92px;font-size:12.5px;color:#bbbbbb;letter-spacing:-0.465px;">Variables</span>
<div class="r" style="left:0px;top:775px;width:4px;height:24px;background:#3c3f41;border:1px solid #6a6d6f;border-left:none;border-radius:0 4px 4px 0;box-sizing:border-box"></div>
<div class="r" style="left:8px;top:778px;width:1px;height:19px;background:repeating-linear-gradient(#6a6d6f 0 1px,transparent 1px 3px)"></div>
<svg class="r" style="left:17px;top:781px;" width="12" height="12" viewBox="0 0 12 12"><path d="M3.500 11.500h4V6H11L5.500 .5 0 6h3.500z" fill="#5f6264"/></svg>
<svg class="r" style="left:42px;top:781px;" width="12" height="12" viewBox="0 0 12 12"><path d="M3.500 .5h4V6H11L5.500 11.500 0 6h3.500z" fill="#3d93d3"/></svg>
<svg class="r" style="left:66px;top:781px;" width="15" height="13" viewBox="0 0 15 13"><path d="M0 .5h14L8.500 6.500V12L5.500 10V6.500z" fill="#3d93d3"/></svg>
<div class="r" style="left:0px;top:802px;width:86px;height:21px;background:#4b6eaf;"></div>
<div class="r" style="left:0px;top:823px;width:86px;height:135px;background:#48443a;"></div>
<div class="r" style="left:0;top:802px;width:86px;height:156px;overflow:hidden">
<span class="t" style="left:0px;top:3.50px;font-size:13px;color:#d6dde8;letter-spacing:-0.079px;">cationProvider</span>
<span class="t" style="left:-3px;top:24.50px;font-size:13px;color:#878787;letter-spacing:0.323px;font-style:italic;">ngframework.security</span>
<span class="t" style="left:0px;top:45.50px;font-size:13px;color:#bbbbbb;letter-spacing:0.200px;">okenEndpointFilter</span>
<span class="t" style="left:0px;top:66.50px;font-size:13px;color:#bbbbbb;letter-spacing:-0.661px;">gFilter</span>
<span class="t" style="left:37px;top:66.50px;font-size:13px;color:#878787;letter-spacing:-0.241px;font-style:italic;">(org.springframework</span>
<span class="t" style="left:0px;top:87.50px;font-size:13px;color:#bbbbbb;letter-spacing:-0.234px;">n</span>
<span class="t" style="left:12.5px;top:87.50px;font-size:13px;color:#878787;letter-spacing:-0.241px;font-style:italic;">(org.springframework</span>
<span class="t" style="left:-2px;top:108.50px;font-size:13px;color:#878787;letter-spacing:0.051px;font-style:italic;">ork.security.web.au</span>
<span class="t" style="left:0px;top:129.50px;font-size:13px;color:#bbbbbb;letter-spacing:-0.234px;">n</span>
<span class="t" style="left:12.5px;top:129.50px;font-size:13px;color:#878787;letter-spacing:-0.241px;font-style:italic;">(org.springframework</span>
<span class="t" style="left:8px;top:150.50px;font-size:13px;color:#bbbbbb;letter-spacing:0.109px;">i</span>
<span class="t" style="left:26px;top:150.50px;font-size:13px;color:#878787;letter-spacing:-0.241px;font-style:italic;">(org.springframework</span>
</div>
<div class="r" style="left:77px;top:802px;width:8px;height:27px;background:rgba(255,255,255,.2);"></div>
<svg class="r" style="left:91px;top:778px;" width="18" height="18" viewBox="0 0 18 18"><path d="M6.500 1v9.500M1.500 5.800h10" stroke="#3fa54b" stroke-width="2.400"/><ellipse cx="5" cy="13.500" rx="2.300" ry="3" fill="#4fc35a"/><ellipse cx="10.300" cy="13.500" rx="2.300" ry="3" fill="#4fc35a"/><path d="M12.500 12c1-3 3-4 3.500-1.500" fill="none" stroke="#a9acae"/></svg>
<div class="r" style="left:93px;top:810px;width:12px;height:2px;background:#5a5d5f;"></div>
<svg class="r" style="left:93px;top:830px;" width="12" height="12" viewBox="0 0 12 12"><path d="M3.500 11.500h4V6H11L5.500 .5 0 6h3.500z" fill="#56595b"/></svg>
<svg class="r" style="left:93px;top:855px;" width="12" height="12" viewBox="0 0 12 12"><path d="M3.500 .5h4V6H11L5.500 11.500 0 6h3.500z" fill="#5a5d5f"/></svg>
<svg class="r" style="left:91px;top:877px;" width="16" height="17" viewBox="0 0 16 17"><path d="M5.500 1.500h6l3 3v9h-9z" fill="#4a4d4f" stroke="#8d9092"/><path d="M1.500 4.500h6l2.500 2.500v8.500h-8.500z" fill="#3c4a56" stroke="#3d93d3" stroke-width="1.300"/></svg>
<div class="r" style="left:88.5px;top:900.5px;width:22px;height:22px;background:#4c5052;border:1px solid #6e7072;border-radius:3px;box-sizing:border-box"></div>
<svg class="r" style="left:91px;top:903px;" width="17" height="16" viewBox="0 0 17 16"><rect x="1.500" y="1" width="14" height="11.500" fill="#8d9092"/><rect x="1.500" y="1" width="14" height="3" fill="#3d93d3"/><rect x="3" y="5.500" width="11" height="5.500" fill="#55585a"/><path d="M4 10c.5-4 2.500-4 3 0M9.500 10c1-4 3-5 4.500-2" fill="none" stroke="#d8dadc"/><ellipse cx="3.500" cy="12.500" rx="2.500" ry="3" fill="#4fc35a"/><ellipse cx="9" cy="12.500" rx="2.500" ry="3" fill="#4fc35a"/></svg>
<div class="r" style="left:113px;top:795px;width:1085px;height:21px;background:#4b6eaf;"></div>
<svg class="r" style="left:117px;top:779.5px;" width="9" height="11" viewBox="0 0 9 11"><path d="M.5 .5L8.500 5.300 .5 10z" fill="#a6a8aa"/></svg>
<div class="r" style="left:136.5px;top:778.7px;width:12.5px;height:3px;background:#c9a365;"></div>
<div class="r" style="left:136.5px;top:783.0px;width:12.5px;height:3px;background:#c9a365;"></div>
<div class="r" style="left:136.5px;top:787.3000000000001px;width:12.5px;height:3px;background:#c9a365;"></div>
<span class="t" style="left:154px;top:778.00px;font-size:13px;color:#f3766c;letter-spacing:-0.059px;">this</span>
<span class="t" style="left:179.5px;top:778.00px;font-size:13px;color:#bbbbbb;">=</span>
<span class="t" style="left:191px;top:778.00px;font-size:13px;color:#8c8c8c;letter-spacing:-0.061px;">{DaoAuthenticationProvider@8603}</span>
<svg class="r" style="left:116px;top:801.5px;" width="11" height="9" viewBox="0 0 11 9"><path d="M.5 .5h9.500L5.250 8.500z" fill="#c3cbd9"/></svg>
<div class="r" style="left:136px;top:799.0px;width:14px;height:14px;background:#c8a062;border-radius:7px"></div>
<span class="t" style="left:139.8px;top:798.84px;font-size:12px;color:#3a2c14;">p</span>
<span class="t" style="left:154px;top:799.00px;font-size:13px;color:#d6dde8;letter-spacing:0.003px;">authentication</span>
<span class="t" style="left:240px;top:799.00px;font-size:13px;color:#d6dde8;">=</span>
<span class="t" style="left:252px;top:799.00px;font-size:13px;color:#c3cde0;letter-spacing:-0.106px;">{UsernamePasswordAuthenticationToken@9251}</span>
<span class="t" style="left:538px;top:799.00px;font-size:13px;color:#c3cde0;letter-spacing:0.004px;">"org.springframework.security.authentication.UsernamePasswordAuthenticationToken@1c44558d: Principal: 46582</span>
<svg class="r" style="left:137px;top:821.5px;" width="9" height="11" viewBox="0 0 9 11"><path d="M.5 .5L8.500 5.300 .5 10z" fill="#a6a8aa"/></svg>
<div class="r" style="left:156px;top:820.0px;width:14px;height:14px;background:#b88a3c;border-radius:7px"></div>
<span class="t" style="left:160.8px;top:821.14px;font-size:12px;color:#3a2c14;">f</span>
<svg class="r" style="left:153px;top:817.5px;" width="8" height="8" viewBox="0 0 8 8"><circle cx="3" cy="3" r="2.500" fill="#c3cbd2"/><path d="M4.500 4.500l3 3" stroke="#a9b0b6" stroke-width="1.200"/></svg>
<span class="t" style="left:174.5px;top:820.00px;font-size:13px;color:#f3766c;letter-spacing:0.120px;">principal</span>
<span class="t" style="left:229px;top:820.00px;font-size:13px;color:#bbbbbb;">=</span>
<span class="t" style="left:241.5px;top:820.00px;font-size:13px;color:#6a8759;letter-spacing:-0.210px;">"46582ae7217343a8b252e3977e7cc421"</span>
<svg class="r" style="left:137px;top:842.5px;" width="9" height="11" viewBox="0 0 9 11"><path d="M.5 .5L8.500 5.300 .5 10z" fill="#a6a8aa"/></svg>
<div class="r" style="left:156px;top:841.0px;width:14px;height:14px;background:#b88a3c;border-radius:7px"></div>
<span class="t" style="left:160.8px;top:842.14px;font-size:12px;color:#3a2c14;">f</span>
<span class="t" style="left:174.5px;top:841.00px;font-size:13px;color:#f3766c;letter-spacing:-0.034px;">credentials</span>
<span class="t" style="left:242px;top:841.00px;font-size:13px;color:#bbbbbb;">=</span>
<span class="t" style="left:254px;top:841.00px;font-size:13px;color:#6a8759;letter-spacing:-0.301px;">"cgGvf5Rotv7D76m9JaArfY3YG6fDec47"</span>
<div class="r" style="left:156px;top:862.0px;width:14px;height:14px;background:#b88a3c;border-radius:7px"></div>
<span class="t" style="left:160.8px;top:863.14px;font-size:12px;color:#3a2c14;">f</span>
<span class="t" style="left:174.5px;top:862.00px;font-size:13px;color:#f3766c;letter-spacing:-0.083px;">details</span>
<span class="t" style="left:217px;top:862.00px;font-size:13px;color:#bbbbbb;">=</span>
<span class="t" style="left:229.5px;top:862.00px;font-size:13px;color:#bbbbbb;letter-spacing:-0.188px;">null</span>
<div class="r" style="left:156px;top:883.0px;width:14px;height:14px;background:#b88a3c;border-radius:7px"></div>
<span class="t" style="left:160.8px;top:884.14px;font-size:12px;color:#3a2c14;">f</span>
<svg class="r" style="left:153px;top:880.5px;" width="8" height="8" viewBox="0 0 8 8"><circle cx="3" cy="3" r="2.500" fill="#c3cbd2"/><path d="M4.500 4.500l3 3" stroke="#a9b0b6" stroke-width="1.200"/></svg>
<span class="t" style="left:174.5px;top:883.00px;font-size:13px;color:#f3766c;letter-spacing:0.047px;">authorities</span>
<span class="t" style="left:240px;top:883.00px;font-size:13px;color:#bbbbbb;">=</span>
<span class="t" style="left:252px;top:883.00px;font-size:13px;color:#8c8c8c;letter-spacing:-0.221px;">{Collections$EmptyList@8578}</span>
<span class="t" style="left:433px;top:883.00px;font-size:13px;color:#bbbbbb;letter-spacing:0.104px;">size = 0</span>
<div class="r" style="left:156px;top:904.0px;width:14px;height:14px;background:#b88a3c;border-radius:7px"></div>
<span class="t" style="left:160.8px;top:905.14px;font-size:12px;color:#3a2c14;">f</span>
<span class="t" style="left:174.5px;top:904.00px;font-size:13px;color:#f3766c;letter-spacing:-0.044px;">authenticated</span>
<span class="t" style="left:258px;top:904.00px;font-size:13px;color:#bbbbbb;">=</span>
<span class="t" style="left:269px;top:904.00px;font-size:13px;color:#bbbbbb;letter-spacing:-0.094px;">false</span>
<svg class="r" style="left:117px;top:926.5px;" width="9" height="11" viewBox="0 0 9 11"><path d="M.5 .5L8.500 5.300 .5 10z" fill="#a6a8aa"/></svg>
<div class="r" style="left:136.5px;top:925.7px;width:12.5px;height:3px;background:#c9a365;"></div>
<div class="r" style="left:136.5px;top:930.0px;width:12.5px;height:3px;background:#c9a365;"></div>
<div class="r" style="left:136.5px;top:934.3000000000001px;width:12.5px;height:3px;background:#c9a365;"></div>
<span class="t" style="left:154px;top:925.00px;font-size:13px;color:#f3766c;letter-spacing:-0.039px;">username</span>
<span class="t" style="left:217px;top:925.00px;font-size:13px;color:#bbbbbb;">=</span>
<span class="t" style="left:228.5px;top:925.00px;font-size:13px;color:#6a8759;letter-spacing:-0.210px;">"46582ae7217343a8b252e3977e7cc421"</span>
<div class="r" style="left:113px;top:949px;width:1085px;height:8px;background:#5a5c5e;"></div>
<div class="r" style="left:113px;top:942px;width:1085px;height:16px;overflow:hidden">
<div class="r" style="left:24px;top:4.500px;width:12px;height:13px;border:1px solid #a9acae;box-sizing:border-box"></div>
<span class="t" style="left:26.3px;top:4.84px;font-size:5.5px;color:#d8dadc;letter-spacing:0.688px;font-weight:bold;">10</span>
<span class="t" style="left:26.3px;top:9.84px;font-size:5.5px;color:#d8dadc;letter-spacing:0.688px;font-weight:bold;">01</span>
<span class="t" style="left:41px;top:4.00px;font-size:13px;color:#5c9cf0;letter-spacing:-0.255px;">cacheWasUsed</span>
<span class="t" style="left:133px;top:4.00px;font-size:13px;color:#bbbbbb;">=</span>
<span class="t" style="left:146px;top:4.00px;font-size:13px;color:#bbbbbb;letter-spacing:-0.094px;">false</span>
</div>
<div class="r" style="left:0px;top:958px;width:1198px;height:2px;background:#2c2e2f;"></div>
<div class="r" style="left:0px;top:960px;width:1198px;height:4px;background:#3c3f41;"></div>
</body></html>
